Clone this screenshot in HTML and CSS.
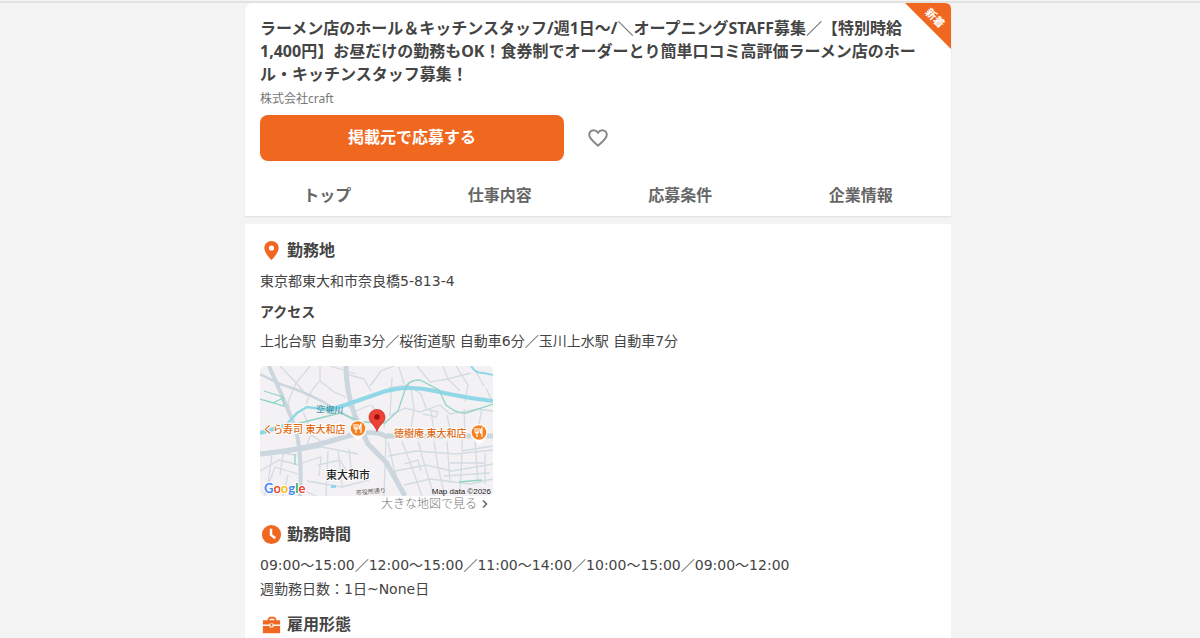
FILE: index.html
```html
<!DOCTYPE html>
<html lang="ja">
<head>
<meta charset="utf-8">
<meta name="viewport" content="width=device-width, initial-scale=1">
<title>ラーメン店のホール＆キッチンスタッフ</title>
<link rel="stylesheet" href="styles.css">
</head>
<body>
<main class="page">
  <header class="card job-header">
    <svg class="ribbon" viewBox="0 0 46 46" role="img" aria-label="新着">
      <path d="M0 0H40Q46 0 46 6V46Z" fill="#f0671f"/>
      <text class="ribbon-text" x="30" y="19" transform="rotate(45 30 15)">新着</text>
    </svg>
    <h1 class="title">ラーメン店のホール＆キッチンスタッフ/週1日～/＼オープニングSTAFF募集／【特別時給<br>1,400円】お昼だけの勤務もOK！食券制でオーダーとり簡単口コミ高評価ラーメン店のホー<br>ル・キッチンスタッフ募集！</h1>
    <p class="company">株式会社craft</p>
    <div class="actions">
      <button class="apply" type="button">掲載元で応募する</button>
      <button class="favorite" type="button" aria-label="お気に入り">
        <svg width="20" height="18" viewBox="0 0 20 18"><path d="M10 16.6C5.5 12.7 1.2 9.7 1.2 5.8C1.2 3.2 3.2 1.2 5.6 1.2C7.4 1.2 9 2.2 10 3.7C11 2.2 12.6 1.2 14.4 1.2C16.8 1.2 18.8 3.2 18.8 5.8C18.8 9.7 14.5 12.7 10 16.6Z" fill="none" stroke="#888" stroke-width="2"/></svg>
      </button>
    </div>
    <nav class="tabs">
      <a href="#top">トップ</a>
      <a href="#work">仕事内容</a>
      <a href="#terms">応募条件</a>
      <a href="#company">企業情報</a>
    </nav>
  </header>

  <div class="card details">
    <section>
      <h2 class="heading">
        <svg class="icon" viewBox="0 0 24 24"><path fill-rule="evenodd" d="M12 2C7.8 2 4.5 5.2 4.5 9.4C4.5 14.8 12 22 12 22S19.500 14.800 19.500 9.400C19.500 5.200 16.200 2 12 2ZM12 6.700A2.700 2.700 0 1 1 12 12.100A2.700 2.700 0 0 1 12 6.700Z" fill="#f0671f"/></svg>
        勤務地
      </h2>
      <p class="text">東京都東大和市奈良橋5-813-4</p>
      <h3 class="subheading">アクセス</h3>
      <p class="text">上北台駅 自動車3分／桜街道駅 自動車6分／玉川上水駅 自動車7分</p>
      <figure class="map">
        <svg class="map-image" viewBox="0 0 233 130" role="img" aria-label="東大和市の地図">
          <rect width="233" height="130" fill="#f3f1f3"/>
          <g fill="none" stroke="#d3dbe3" stroke-width="1.3">
            <path d="M20 0L39 20L47 30M50 0L36 17L28 36L30 48M46 38Q52 21 60 15L74 26L86 31M60 15V0M86 8L104 13L111 25M70 0L96 8M84 38L96 45L110 39M50 68L62 76L82 72L94 64M43 46L52 66L47 78"/>
            <path d="M0 90L14 86L37 89M4 130L15 101L38 108M0 105L19 94L39 99M23 88L20 109M12 88L8 118M38 85L62 81L98 88M42 97L61 91L59 110M47 115L82 121L109 114M58 99L80 94L88 108M78 84L82 120M68 85L66 130M89 83L92 112M28 109L23 130M37 121L56 130"/>
            <path d="M110 20L121 5L134 0M111 39L125 54L124 62M128 22L148 19L161 28L166 42M139 1L144 18M157 0L170 16L188 13L200 25M183 0L188 13L211 7M196 0L208 19L205 35M129 50L145 42L160 46L180 39L190 48L218 43L233 45M151 22L154 43L150 68M171 45L174 67M187 49L191 67M204 43L205 67M222 43L217 68M165 43L178 46L176 51L163 48"/>
            <path d="M128 76L134 103L144 130M142 75L151 99L162 130M158 75L164 97L174 130M128 90L156 85L196 88L233 84M135 105L166 99L192 105L233 98M144 119L170 113L210 118L233 113M174 75L178 101L185 130M187 75L190 117M202 87L200 126M215 75L218 117M225 87L225 118M190 97H224M184 110L230 107M202 68V85L233 80M144 98L158 94L161 105"/>
            <path d="M126 70L124 130M132 12L130 49M215 4L224 20M226 22L232 35"/>
          </g>
          <g fill="none" stroke="#cbd6df">
            <path d="M9 0Q21 27 32 53T40 130" stroke-width="4"/>
            <path d="M0 8L20 18Q50 27 75 43L96 55" stroke-width="2.500"/>
            <path d="M86 0Q86 25 95 50L108 78L126 96L145 130" stroke-width="5"/>
            <path d="M0 88Q43 84 78 73T125 70H233" stroke-width="5"/>
          </g>
          <g fill="none" stroke="#90d8e8">
            <path d="M0 67L27 58L37 47L47 41L70 44" stroke-width="2.500"/>
            <path d="M0 67L24 60M70 44L91 37L117 28Q144 18 175 25T233 35" stroke-width="4"/>
            <path d="M211 0Q216 8 224 7L233 9" stroke-width="2"/>
          </g>
          <path d="M0 33L13 37L23 32L24 40L4 34M4 25L23 31M32 59L52 54L80 47L102 56L125 57L138 45L145 24Q147 14 160 14L179 24L186 39Q197 48 206 47L233 38M199 116L222 114M35 99V88" fill="none" stroke="#91d4c2" stroke-width="1.300"/>
          <path d="M71 119h5v3h-5z" fill="#90d8e8"/>
          <text class="map-river" x="56" y="46" transform="rotate(4 56 46)">空堀川</text>
          <g class="map-shop"><text x="3" y="67">くら寿司 東大和店</text><text x="134" y="71">徳樹庵 東大和店</text></g>
          <text class="map-city" x="66" y="113">東大和市</text>
          <text class="map-road" x="96" y="129" transform="rotate(-5 96 129)">市役所通り</text>
          <g>
            <g><path d="M90 67L98 75L106 67Z" fill="#fff"/><circle cx="98" cy="62.500" r="8.500" fill="#fff"/><circle cx="98" cy="62.500" r="7.300" fill="#f58220"/><path d="M94 58V61Q94 63 96 63T98 61V58M96 58V67M101 67V58Q99 60 99.500 63H101" fill="none" stroke="#fff" stroke-width="1.100"/></g>
            <g><path d="M211 71L219 79L227 71Z" fill="#fff"/><circle cx="219" cy="66.500" r="8.500" fill="#fff"/><circle cx="219" cy="66.500" r="7.300" fill="#f58220"/><path d="M215 62V65Q215 67 217 67T219 65V62M217 62V71M222 71V62Q220 64 220.500 67H222" fill="none" stroke="#fff" stroke-width="1.100"/></g>
          </g>
          <path d="M117 43.500C112.200 43.500 109 47 109 51.200C109 57 114.500 58 117 65.500C119.500 58 125 57 125 51.200C125 47 121.800 43.500 117 43.500Z" fill="#ea4335" stroke="#c5221f" stroke-width=".6"/><circle cx="117" cy="51" r="2.800" fill="#a50e0e"/>
          <text class="map-logo" x="4" y="127"><tspan fill="#4285f4">G</tspan><tspan fill="#ea4335">o</tspan><tspan fill="#fbbc04">o</tspan><tspan fill="#4285f4">g</tspan><tspan fill="#34a853">l</tspan><tspan fill="#ea4335">e</tspan></text>
          <text class="map-credit" x="231" y="128">Map data ©2026</text>
        </svg>
        <figcaption><a class="map-link" href="#map">大きな地図で見る
          <svg width="6" height="8" viewBox="0 0 6 8"><path d="M1 0.500L4.500 4L1 7.500" fill="none" stroke="#666" stroke-width="1.500"/></svg></a></figcaption>
      </figure>
    </section>
    <section>
      <h2 class="heading">
        <svg class="icon" viewBox="0 0 24 24"><circle cx="12" cy="12" r="10" fill="#f0671f"/><path d="M11.500 6V12.500L16 16" fill="none" stroke="#fff" stroke-width="2.600"/></svg>
        勤務時間
      </h2>
      <p class="text">09:00～15:00／12:00～15:00／11:00～14:00／10:00～15:00／09:00～12:00<br>週勤務日数：1日~None日</p>
    </section>
    <section>
      <h2 class="heading">
        <svg class="icon" viewBox="0 0 24 24"><path fill-rule="evenodd" d="M3 7.500H8V6L10 4H15L17 6V7.500H21V12H14V11H10V12H3ZM10 7.500H15V6H10ZM3 13.500H10V15H14V13.500H21V21H3Z" fill="#f0671f"/><path d="M11 11.500H13V14H11Z" fill="#f0671f"/></svg>
        雇用形態
      </h2>
    </section>
  </div>
</main>
</body>
</html>
```
FILE: styles.css
```css
* { box-sizing: border-box; }
body {
  margin: 0;
  background: #f4f4f4;
  color: #444;
  font-family: "Noto Sans", "Noto Sans CJK JP", sans-serif;
}
body::before {
  content: "";
  display: block;
  height: 2px;
  border-top: 1px solid #f4f4f4;
  background: #e2e2e2;
}
h1, h2, h3, p, figure { margin: 0; }
a { color: inherit; text-decoration: none; }
svg { display: block; }
button { font: inherit; border: 0; cursor: pointer; }

.page {
  max-width: 710px;
  margin: 0 auto;
  padding-right: 4px;
  display: flex;
  flex-direction: column;
  gap: 8px;
}
.card { background: #fff; }
.job-header {
  position: relative;
  padding: 14px 15px 8px;
  border-radius: 8px 8px 0 0;
  box-shadow: 0 1px 2px #ddd;
}
.ribbon {
  position: absolute;
  top: 0;
  right: 0;
  width: 46px;
  height: 46px;
}
.ribbon-text {
  font-size: 11px;
  font-weight: 700;
  text-anchor: middle;
  fill: #fff;
}
.title {
  font-size: 16px;
  line-height: 23px;
  white-space: nowrap;
}
.company {
  padding-top: 3px;
  font-size: 12px;
  line-height: 20px;
  color: #777;
}
.actions {
  display: flex;
  align-items: center;
  gap: 24px;
  padding-top: 6px;
}
.apply {
  width: 45%;
  height: 46px;
  padding: 0 0 4px;
  border-radius: 8px;
  background: #f0671f;
  color: #fff;
  font-size: 16px;
  font-weight: 700;
}
.favorite {
  padding: 0;
  background: none;
}
.tabs {
  display: flex;
  justify-content: space-around;
  margin: 21px -15px 0;
  font-size: 16px;
  font-weight: 700;
  line-height: 26px;
  color: #666;
}

.details { padding: 14px 15px 20px; }
.details section { padding-bottom: 4px; }
.heading {
  display: flex;
  align-items: center;
  gap: 4px;
  font-size: 16px;
  line-height: 24px;
}
.icon {
  width: 23px;
  height: 23px;
}
.text {
  padding: 7px 0;
  font-family: "DejaVu Sans", "Noto Sans CJK JP", sans-serif;
  font-size: 14px;
  line-height: 24px;
}
.subheading {
  padding-top: 2px;
  font-size: 14px;
  line-height: 20px;
}
.map {
  width: 233px;
  padding: 6px 0;
}
.map-image {
  width: 100%;
  border-radius: 5px;
}
.map-link {
  display: flex;
  align-items: center;
  justify-content: flex-end;
  gap: 5px;
  padding-right: 5px;
  font-size: 12px;
  font-weight: 300;
  line-height: 16px;
  color: #777;
}
.map-river { font-size: 9px; fill: #238b9c; }
.map-shop {
  font-size: 10px;
  font-weight: 500;
  fill: #e06b16;
  stroke: #fff;
  stroke-width: 2px;
  paint-order: stroke;
}
.map-city {
  font-size: 11px;
  font-weight: 500;
  fill: #222;
  stroke: #fff;
  stroke-width: 2px;
  paint-order: stroke;
}
.map-road { font-size: 6px; fill: #555; }
.map-logo {
  font-family: Lato, sans-serif;
  font-size: 13px;
  font-weight: 700;
  stroke: #fff;
  stroke-width: 2px;
  paint-order: stroke;
}
.map-credit {
  font-family: "Liberation Sans", sans-serif;
  font-size: 8px;
  text-anchor: end;
  fill: #222;
}
```
